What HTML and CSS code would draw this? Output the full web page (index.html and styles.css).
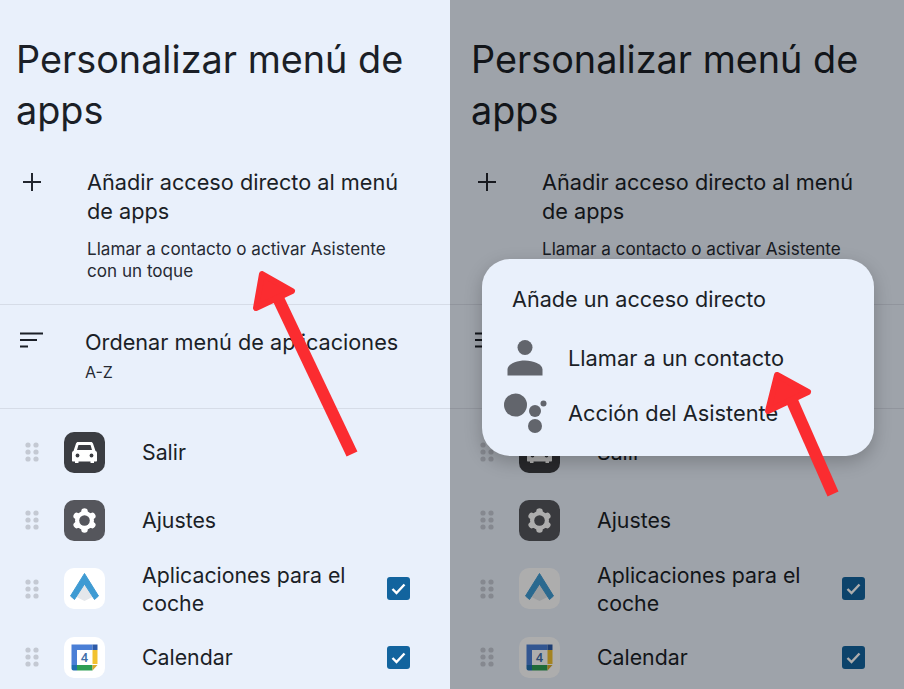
FILE: index.html
```html
<!DOCTYPE html>
<html lang="es">
<head>
    <meta charset="UTF-8">
    <meta name="viewport" content="width=device-width, initial-scale=1.0">
    <title>Personalizar menú de apps</title>
    <link rel="stylesheet" href="styles.css">
</head>
<body>

    <svg class="sprites" aria-hidden="true">
        <symbol id="plus" viewBox="0 0 18 18"><path d="M9 0v18M0 9h18" fill="none" stroke="#22262e" stroke-width="2"/></symbol>
        <symbol id="sort" viewBox="0 0 24 16"><path d="M0 1.500h23M0 8h17M0 14.500h8" fill="none" stroke="#1b1f27" stroke-width="2.200"/></symbol>
        <symbol id="handle" viewBox="0 0 14 20">
            <g fill="#c4c9d3">
                <circle cx="3" cy="3" r="2.600"/><circle cx="11" cy="3" r="2.600"/>
                <circle cx="3" cy="10" r="2.600"/><circle cx="11" cy="10" r="2.600"/>
                <circle cx="3" cy="17" r="2.600"/><circle cx="11" cy="17" r="2.600"/>
            </g>
        </symbol>
        <symbol id="car" viewBox="0 0 41 41">
            <rect width="41" height="41" rx="10" fill="#3b3d42"/>
            <path d="M12 11.500c.3-.9 1.100-1.500 2-1.500h13c.9 0 1.700.6 2 1.500l2.500 7.500c1 .4 1.500 1.200 1.500 2.200v7.300c0 .6-.4 1-1 1h-2v1.500h-3.500v-1.500h-12v1.500h-3.500v-1.500h-2c-.6 0-1-.4-1-1v-7.300c0-1 .5-1.800 1.500-2.200z" fill="#fff"/>
            <path d="M14.500 13h12l1.500 5H13z" fill="#3b3d42"/>
            <circle cx="13.500" cy="23.500" r="1.900" fill="#3b3d42"/><circle cx="27.500" cy="23.500" r="1.900" fill="#3b3d42"/>
        </symbol>
        <symbol id="gear" viewBox="0 0 41 41">
            <rect width="41" height="41" rx="10" fill="#55565c"/>
            <circle cx="20.500" cy="20.500" r="9.500" fill="#fff"/>
            <g stroke="#fff" stroke-width="6.500" stroke-linecap="round">
                <path d="M20.500 11.500v18"/>
                <path d="M12.700 16l15.600 9"/>
                <path d="M12.700 25l15.600-9"/>
            </g>
            <circle cx="20.500" cy="20.500" r="5.300" fill="#55565c"/>
        </symbol>
        <symbol id="auto" viewBox="0 0 41 41">
            <rect width="41" height="41" rx="10" fill="#fff"/>
            <path d="M20.500 15l-8 14 8 4 8-4z" fill="#e4e7eb"/>
            <path d="M20.500 5.500L6.500 28l4 3.500 10-15.500 10 15.500 4-3.500z" fill="#3f9bd3" stroke="#3f9bd3" stroke-linejoin="round"/>
        </symbol>
        <symbol id="calendar" viewBox="0 0 41 41">
            <rect width="41" height="41" rx="10" fill="#fff"/>
            <path d="M7.500 7.500h21v5.500h-15.500v15h-5.500z" fill="#4a7fd6"/>
            <path d="M28.500 7.500h5v5.500h-5z" fill="#2c5aa8"/>
            <path d="M28.500 13h5v14h-5z" fill="#f2c230"/>
            <path d="M7.500 28h5.500v5.500h-3.500c-1.100 0-2-.9-2-2z" fill="#1f6fb0"/>
            <path d="M13 28h15.500v5.500H13z" fill="#2f9e55"/>
            <path d="M28.500 28h5l-5 5.500z" fill="#d9a92a"/>
        </symbol>
        <symbol id="check" viewBox="0 0 23 23">
            <rect width="23" height="23" rx="3" fill="#12649e"/>
            <path d="M5.500 12l4 4 8-8.500" fill="none" stroke="#fff" stroke-width="2.400"/>
        </symbol>
        <symbol id="person" viewBox="0 0 36 36">
            <circle cx="18" cy="7.500" r="7.500" fill="#62656c"/>
            <path d="M.5 35.500v-6c0-5.500 9.500-9 17.500-9s17.500 3.500 17.500 9v6z" fill="#62656c"/>
        </symbol>
        <symbol id="assistant" viewBox="0 0 43 40">
            <circle cx="11.500" cy="12" r="11.500" fill="#62656c"/>
            <circle cx="31" cy="18" r="6" fill="#62656c"/>
            <circle cx="31" cy="33" r="7" fill="#62656c"/>
            <circle cx="39.500" cy="10.500" r="3" fill="#62656c"/>
        </symbol>
        <symbol id="arrow-long" viewBox="0 0 450 689" overflow="visible">
            <path d="M277 296L352 454" fill="none" stroke="#fb2c30" stroke-width="12"/>
            <path d="M262 274L292 291 256 308z" fill="#fb2c30" stroke="#fb2c30" stroke-width="6" stroke-linejoin="round"/>
        </symbol>
        <symbol id="arrow-short" viewBox="0 0 454 689" overflow="visible">
            <path d="M339 394L383 494" fill="none" stroke="#fb2c30" stroke-width="12"/>
            <path d="M327 375L358 392 318 411z" fill="#fb2c30" stroke="#fb2c30" stroke-width="6" stroke-linejoin="round"/>
        </symbol>
    </svg>

    <div class="screens">
        <section class="screen">
            <h1 class="title">Personalizar menú de apps</h1>

            <div class="option option-add">
                <svg class="icon-plus"><use href="#plus"/></svg>
                <div>
                    <div class="option-name">Añadir acceso directo al menú de apps</div>
                    <div class="option-note">Llamar a contacto o activar Asistente con un toque</div>
                </div>
            </div>
            <div class="option option-sort">
                <svg class="icon-sort"><use href="#sort"/></svg>
                <div>
                    <div class="option-name">Ordenar menú de aplicaciones</div>
                    <div class="option-note">A-Z</div>
                </div>
            </div>

            <ul class="apps">
                <li class="app"><svg class="handle"><use href="#handle"/></svg><svg class="app-icon"><use href="#car"/></svg><span class="app-name">Salir</span></li>
                <li class="app"><svg class="handle"><use href="#handle"/></svg><svg class="app-icon"><use href="#gear"/></svg><span class="app-name">Ajustes</span></li>
                <li class="app"><svg class="handle"><use href="#handle"/></svg><svg class="app-icon"><use href="#auto"/></svg><span class="app-name">Aplicaciones para el coche</span><svg class="checkbox"><use href="#check"/></svg></li>
                <li class="app"><svg class="handle"><use href="#handle"/></svg><svg class="app-icon" viewBox="0 0 41 41"><use href="#calendar"/><text x="20.500" y="25" text-anchor="middle" class="calendar-day">4</text></svg><span class="app-name">Calendar</span><svg class="checkbox"><use href="#check"/></svg></li>
            </ul>

            <svg class="arrow" viewBox="0 0 450 689"><use href="#arrow-long"/></svg>
        </section>

        <section class="screen screen-dimmed">
            <h1 class="title">Personalizar menú de apps</h1>

            <div class="option option-add">
                <svg class="icon-plus"><use href="#plus"/></svg>
                <div>
                    <div class="option-name">Añadir acceso directo al menú de apps</div>
                    <div class="option-note">Llamar a contacto o activar Asistente con un toque</div>
                </div>
            </div>
            <div class="option option-sort">
                <svg class="icon-sort"><use href="#sort"/></svg>
                <div>
                    <div class="option-name">Ordenar menú de aplicaciones</div>
                    <div class="option-note">A-Z</div>
                </div>
            </div>

            <ul class="apps">
                <li class="app"><svg class="handle"><use href="#handle"/></svg><svg class="app-icon"><use href="#car"/></svg><span class="app-name">Salir</span></li>
                <li class="app"><svg class="handle"><use href="#handle"/></svg><svg class="app-icon"><use href="#gear"/></svg><span class="app-name">Ajustes</span></li>
                <li class="app"><svg class="handle"><use href="#handle"/></svg><svg class="app-icon"><use href="#auto"/></svg><span class="app-name">Aplicaciones para el coche</span><svg class="checkbox"><use href="#check"/></svg></li>
                <li class="app"><svg class="handle"><use href="#handle"/></svg><svg class="app-icon" viewBox="0 0 41 41"><use href="#calendar"/><text x="20.500" y="25" text-anchor="middle" class="calendar-day">4</text></svg><span class="app-name">Calendar</span><svg class="checkbox"><use href="#check"/></svg></li>
            </ul>

            <div class="scrim"></div>

            <div class="dialog">
                <h2 class="dialog-title">Añade un acceso directo</h2>
                <div class="dialog-item"><svg class="icon-person"><use href="#person"/></svg><span>Llamar a un contacto</span></div>
                <div class="dialog-item"><svg class="icon-assistant"><use href="#assistant"/></svg><span>Acción del Asistente</span></div>
            </div>

            <svg class="arrow" viewBox="0 0 454 689"><use href="#arrow-short"/></svg>
        </section>
    </div>

</body>
</html>
```

FILE: styles.css
```css
* {
    margin: 0;
    padding: 0;
    box-sizing: border-box;
}

html, body {
    height: 100%;
    overflow: hidden;
}

body {
    font-family: 'Inter', 'Open Sans', sans-serif;
    color: #1b1f27;
    background: #e9f0fb;
}

.sprites {
    position: absolute;
    width: 0;
    height: 0;
}

.screens {
    display: grid;
    grid-template-columns: 450px 454px;
    height: 689px;
}

.screen {
    --inset: 0px;
    position: relative;
    height: 689px;
    overflow: hidden;
    background: #e9f0fb;
}

.screen-dimmed {
    --inset: 5px;
}

.title {
    font-size: 37.800px;
    font-weight: 400;
    line-height: 51px;
    padding: 34px 0 0 calc(16px + var(--inset));
    width: 440px;
}

.option {
    display: flex;
    align-items: flex-start;
    border-bottom: 1px solid #d6dce7;
}

.option-add {
    height: 169px;
    padding: 32px 40px 0 calc(23px + var(--inset));
}

.option-sort {
    height: 104px;
    padding: 23px 40px 0 calc(20px + var(--inset));
}

.option-name {
    font-size: 21.700px;
    line-height: 29px;
}

.option-note {
    font-size: 17.100px;
    line-height: 22px;
    margin-top: 12px;
    color: #262a33;
}

.option-sort .option-note {
    font-size: 16px;
    margin-top: 4px;
}

.icon-plus {
    width: 18px;
    height: 18px;
    margin: 5px 46px 0 0;
    flex: none;
}

.icon-sort {
    width: 24px;
    height: 16px;
    margin: 4px 41px 0 0;
    flex: none;
}

.apps {
    list-style: none;
    margin-top: 9px;
}

.app {
    display: flex;
    align-items: center;
    width: calc(450px + var(--inset));
    height: 68.300px;
    padding: 0 40px 0 calc(25px + var(--inset));
}

.handle {
    width: 14px;
    height: 20px;
    flex: none;
}

.app-icon {
    width: 41px;
    height: 41px;
    margin-left: 25px;
    flex: none;
}

.app-name {
    font-size: 21.300px;
    line-height: 28px;
    margin-left: 37px;
    width: 230px;
}

.calendar-day {
    font-family: 'Roboto', sans-serif;
    font-size: 13px;
    font-weight: 500;
    fill: #3f6ea8;
}

.checkbox {
    width: 23px;
    height: 23px;
    margin-left: auto;
    flex: none;
}

.scrim {
    position: absolute;
    inset: 0;
    background: rgba(0, 0, 0, 0.32);
}

.dialog {
    position: absolute;
    left: 32px;
    top: 259px;
    width: 392px;
    height: 197px;
    padding: 26px 22px 0 22px;
    background: #e9f0fb;
    border-radius: 28px;
    box-shadow: 0 6px 18px rgba(0, 0, 0, 0.22);
}

.dialog-title {
    font-size: 21.600px;
    font-weight: 400;
    line-height: 28px;
    padding-left: 8px;
    margin-bottom: 17px;
}

.dialog-item {
    display: flex;
    align-items: center;
    height: 55px;
    font-size: 21.800px;
}

.icon-person {
    width: 36px;
    height: 36px;
    margin: 0 25px 0 3px;
    flex: none;
}

.icon-assistant {
    width: 43px;
    height: 40px;
    margin-right: 21px;
    flex: none;
}

.arrow {
    position: absolute;
    inset: 0;
    width: 100%;
    height: 100%;
}
```
